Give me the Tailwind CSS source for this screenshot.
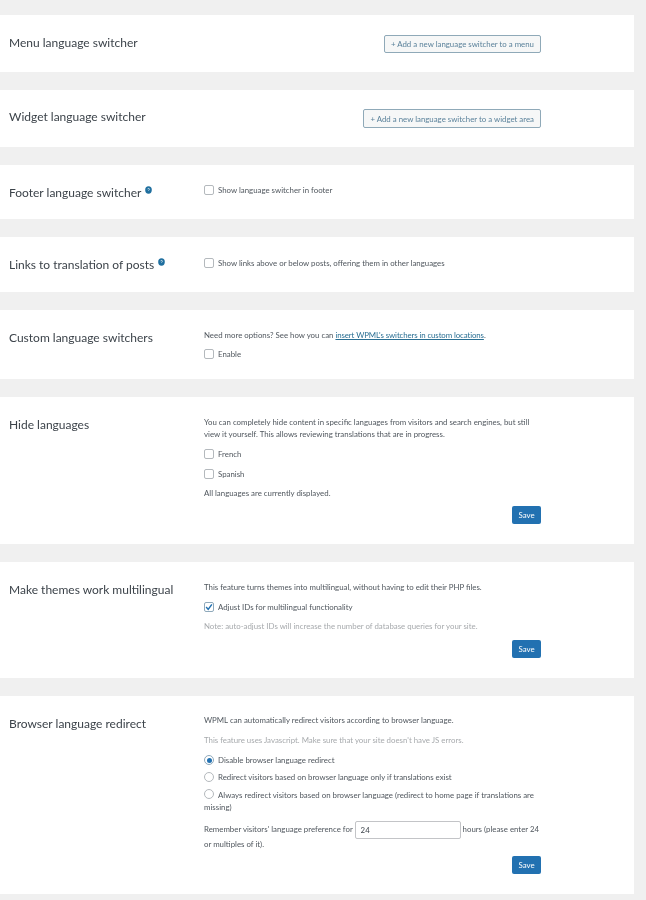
<!DOCTYPE html>
<html lang="en">
<head>
  <meta charset="UTF-8">
  <title>WPML Languages</title>
  <script src="https://cdn.jsdelivr.net/npm/@tailwindcss/browser@4"></script>
</head>
<body class="bg-[#f0f0f0] font-['Lato',sans-serif] text-[7.85px] leading-[12px] text-[#50575e] h-[900px] overflow-hidden">
<main class="w-[634px] pt-[15px] flex flex-col gap-[18px] blur-[0.35px]">

  <!-- Menu switcher -->
  <section class="bg-white h-[57px] pl-[9px] pr-[93px] flex justify-between">
    <h2 class="text-[12px] leading-[16px] text-[#3c434a] mt-[20px]">Menu language switcher</h2>
    <button class="self-start mt-[20px] h-[18px] px-[6px] border border-[#8fa9b8] rounded-[2px] bg-[#f6f7f7] text-[#5b829b]">+ Add a new language switcher to a menu</button>
  </section>

  <!-- Widget switcher -->
  <section class="bg-white h-[57px] pl-[9px] pr-[93px] flex justify-between">
    <h2 class="text-[12px] leading-[16px] text-[#3c434a] mt-[19px]">Widget language switcher</h2>
    <button class="self-start mt-[19px] h-[19px] px-[6px] border border-[#8fa9b8] rounded-[2px] bg-[#f6f7f7] text-[#5b829b]">+ Add a new language switcher to a widget area</button>
  </section>

  <!-- Footer switcher -->
  <section class="bg-white h-[54px] pl-[9px] flex">
    <h2 class="w-[195px] shrink-0 flex items-start gap-[4px] text-[12px] leading-[16px] text-[#3c434a] mt-[20px]">
      Footer language switcher
      <svg class="w-[7px] h-[8px] mt-[1px]" viewBox="0 0 7 8"><ellipse cx="3.5" cy="4" rx="3.3" ry="3.7" fill="#1f6f9f"/><path d="M2.5 3.2c.2-1 2-1 2 0 0 .7-1 .7-1 1.5" stroke="#fff" stroke-width=".7" fill="none"/></svg>
    </h2>
    <label class="flex items-center gap-[4px] h-[12px] mt-[19px]">
      <span class="w-[10px] h-[10px] border border-[#b4b9bd] rounded-[2px] bg-white"></span>Show language switcher in footer
    </label>
  </section>

  <!-- Links to translation -->
  <section class="bg-white h-[55px] pl-[9px] flex">
    <h2 class="w-[195px] shrink-0 flex items-start gap-[4px] text-[12px] leading-[16px] text-[#3c434a] mt-[20px]">
      Links to translation of posts
      <svg class="w-[7px] h-[8px] mt-[1px]" viewBox="0 0 7 8"><ellipse cx="3.5" cy="4" rx="3.3" ry="3.7" fill="#1f6f9f"/><path d="M2.5 3.2c.2-1 2-1 2 0 0 .7-1 .7-1 1.5" stroke="#fff" stroke-width=".7" fill="none"/></svg>
    </h2>
    <label class="flex items-center gap-[4px] h-[12px] mt-[20px]">
      <span class="w-[10px] h-[10px] border border-[#b4b9bd] rounded-[2px] bg-white"></span>Show links above or below posts, offering them in other languages
    </label>
  </section>

  <!-- Custom switchers -->
  <section class="bg-white h-[69px] pl-[9px] flex">
    <h2 class="w-[195px] shrink-0 text-[12px] leading-[16px] text-[#3c434a] mt-[20px]">Custom language switchers</h2>
    <div class="w-[337px] pt-[19px] flex flex-col gap-[7px]">
      <p>Need more options? See how you can <a class="underline tracking-[-0.1px] text-[#2a6f93]">insert WPML's switchers in custom locations</a>.</p>
      <label class="flex items-center gap-[4px]">
        <span class="w-[10px] h-[10px] border border-[#b4b9bd] rounded-[2px] bg-white"></span>Enable
      </label>
    </div>
  </section>

  <!-- Hide languages -->
  <section class="bg-white h-[147px] pl-[9px] flex">
    <h2 class="w-[195px] shrink-0 text-[12px] leading-[16px] text-[#3c434a] mt-[20px]">Hide languages</h2>
    <div class="w-[337px] pt-[19px] flex flex-col">
      <p class="w-[330px]">You can completely hide content in specific languages from visitors and search engines, but still view it yourself. This allows reviewing translations that are in progress.</p>
      <label class="flex items-center gap-[4px] mt-[8px]">
        <span class="w-[10px] h-[10px] border border-[#b4b9bd] rounded-[2px] bg-white"></span>French
      </label>
      <label class="flex items-center gap-[4px] mt-[8px]">
        <span class="w-[10px] h-[10px] border border-[#b4b9bd] rounded-[2px] bg-white"></span>Spanish
      </label>
      <p class="mt-[7px]">All languages are currently displayed.</p>
      <button class="self-end mt-[7px] w-[29px] h-[18px] rounded-[2px] bg-[#2271b1] text-white">Save</button>
    </div>
  </section>

  <!-- Themes -->
  <section class="bg-white h-[116px] pl-[9px] flex">
    <h2 class="w-[195px] shrink-0 text-[12px] leading-[16px] text-[#3c434a] mt-[20px]">Make themes work multilingual</h2>
    <div class="w-[337px] pt-[19px] flex flex-col">
      <p>This feature turns themes into multilingual, without having to edit their PHP files.</p>
      <label class="flex items-center gap-[4px] mt-[8px]">
        <span class="w-[10px] h-[10px] border border-[#8fa9bb] rounded-[2px] bg-white flex items-center justify-center">
          <svg class="w-[8px] h-[8px]" viewBox="0 0 7 7"><path d="M1 3.6 2.8 5.6 6 1.2" stroke="#2271b1" stroke-width="1.3" fill="none"/></svg>
        </span>Adjust IDs for multilingual functionality
      </label>
      <p class="mt-[7px] text-[#a7aaad]">Note: auto-adjust IDs will increase the number of database queries for your site.</p>
      <button class="self-end mt-[8px] w-[29px] h-[18px] rounded-[2px] bg-[#2271b1] text-white">Save</button>
    </div>
  </section>

  <!-- Redirect -->
  <section class="bg-white h-[198px] pl-[9px] flex">
    <h2 class="w-[195px] shrink-0 text-[12px] leading-[16px] text-[#3c434a] mt-[20px]">Browser language redirect</h2>
    <div class="w-[337px] pt-[18px] flex flex-col">
      <p>WPML can automatically redirect visitors according to browser language.</p>
      <p class="mt-[8px] text-[#a7aaad]">This feature uses Javascript. Make sure that your site doesn't have JS errors.</p>
      <label class="flex items-center gap-[4px] mt-[8px]">
        <span class="w-[10px] h-[10px] border border-[#8fa9bb] rounded-full bg-white flex items-center justify-center"><span class="w-[5px] h-[5px] rounded-full bg-[#2271b1]"></span></span>Disable browser language redirect
      </label>
      <label class="flex items-center gap-[4px] mt-[5px]">
        <span class="w-[10px] h-[10px] border border-[#b4b9bd] rounded-full bg-white"></span>Redirect visitors based on browser language only if translations exist
      </label>
      <p class="mt-[6px]"><span class="inline-block w-[10px] h-[10px] mr-[4px] align-[-1px] border border-[#b4b9bd] rounded-full bg-white"></span>Always redirect visitors based on browser language (redirect to home page if translations are missing)</p>
      <p class="mt-[9px] w-[340px] leading-[15px]">Remember visitors' language preference for <input value="24" class="inline-block w-[106px] h-[18px] -my-[2px] px-[5px] border border-[#c3c4c7] rounded-[2px] bg-white text-[#3c434a] align-middle"> hours (please enter 24 or multiples of it).</p>
      <button class="self-end mt-[4px] w-[29px] h-[18px] rounded-[2px] bg-[#2271b1] text-white">Save</button>
    </div>
  </section>

</main>
</body>
</html>
